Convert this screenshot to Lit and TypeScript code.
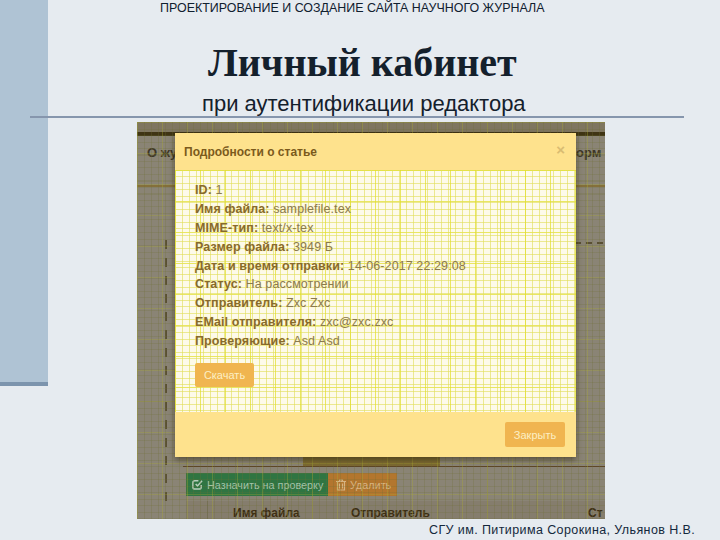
import { LitElement, html, css } from "lit";
import { customElement } from "lit/decorators.js";

const rows: [string, string][] = [
  ["ID:", "1"],
  ["Имя файла:", "samplefile.tex"],
  ["MIME-тип:", "text/x-tex"],
  ["Размер файла:", "3949 Б"],
  ["Дата и время отправки:", "14-06-2017 22:29:08"],
  ["Статус:", "На рассмотрении"],
  ["Отправитель:", "Zxc Zxc"],
  ["EMail отправителя:", "zxc@zxc.zxc"],
  ["Проверяющие:", "Asd Asd"],
];

@customElement("app-root")
export class AppRoot extends LitElement {
  static styles = css`
    :host {
      display: block;
      width: 720px;
      height: 540px;
      overflow: hidden;
      background: #e6ebf0;
      font-family: "Liberation Sans", Arial, sans-serif;
    }
    .slide { display: grid; grid-template-columns: 48px 1fr; height: 540px; }
    .side { height: 386px; background: #afc3d4; border-bottom: 4px solid #7c94ad; box-sizing: border-box; }
    .main { display: flex; flex-direction: column; min-width: 0; }
    .top {
      height: 17px; margin-left: 112px; font-size: 12.45px; line-height: 17px; color: #10202f; white-space: nowrap;
    }
    h1 {
      margin: 20px 0 0; padding-left: 160px; height: 53px; font: bold 40px/52px "Liberation Serif", serif;
      color: #14202c; white-space: nowrap;
    }
    .sub {
      margin: 0; padding-left: 154px; height: 26px; font-size: 22px; line-height: 28px; color: #14202c;
      white-space: nowrap;
    }
    .rule { height: 2px; margin: 0 36px 0 -18px; background: #8696ad; flex: none; }
    .shot {
      position: relative; margin: 4px 0 0 89px; width: 468px; height: 397px; flex: none; overflow: hidden;
      background: #8a8475;
      display: flex; flex-direction: column;
    }
    .band { height: 10px; background: #7f7660; flex: none; }
    .navline { height: 4px; background: #3f3414; flex: none; }
    .navtext {
      display: flex; justify-content: space-between; padding: 8px 0 0 10px; height: 22px; font: bold 13px/18px "Liberation Sans", sans-serif; color: #3e3626; white-space: nowrap;
    }
    .clip { width: 28px; overflow: hidden; }
    .clip2 { width: 29px; overflow: hidden; }
    .brown { height: 2px; background: #85703a; margin-top: 19px; flex: none; }
    .spacer { flex: 1; }
    .dash {
      position: absolute; left: 28px; top: 118px; height: 270px; width: 2px;
      background: repeating-linear-gradient(to bottom, #5a5034 0 9px, transparent 9px 18px);
    }
    .dash2 {
      position: absolute; left: 438px; top: 120px; width: 30px; height: 2px;
      background: repeating-linear-gradient(to right, #5a5034 0 6px, transparent 6px 11px);
    }
    .under {
      height: 9px; margin-left: 166px; width: 137px; background: #7d6a32; box-sizing: border-box; flex: none;
    }
    .hr { height: 1px; background: #5a3c22; margin: 0 0 6px 46px; flex: none; }
    .actions { display: flex; margin-left: 49px; height: 23px; flex: none; }
    .btn {
      display: flex; align-items: center; gap: 4px; font-size: 10.8px; white-space: nowrap; color: #a3c4ac; padding: 0 6px;
    }
    .btn svg { flex: none; }
    .assign { width: 142px; background: #2f7542; box-sizing: border-box; }
    .del { width: 69px; background: #b3762e; color: #d6b483; box-sizing: border-box; padding: 0 8px; }
    .thead {
      margin: 5px 0 0 49px; height: 18px; flex: none; position: relative; background: #857d6d;
      display: grid; grid-template-columns: 47px 118px 237px 1fr; font: bold 12px/24px "Liberation Sans", sans-serif; color: #3e2f14; white-space: nowrap; overflow: hidden;
    }
    .thead span:first-child { border-right: 1px solid #77705f; margin-right: 25px; }
    .grid {
      position: absolute; inset: 0; pointer-events: none;
      background-image:
        repeating-linear-gradient(to right, rgba(170,170,50,.35) 0 1px, transparent 1px 25px),
        repeating-linear-gradient(to right, rgba(110,110,50,.24) 0 1px, transparent 1px 7px),
        repeating-linear-gradient(to bottom, rgba(170,170,50,.3) 0 1px, transparent 1px 31px),
        repeating-linear-gradient(to bottom, rgba(110,110,50,.22) 0 1px, transparent 1px 6.5px);
    }
    .modal {
      position: absolute; left: 38px; top: 11px; width: 401px; height: 324px;
      display: flex; flex-direction: column; background: #fee28d;
      box-shadow: 0 3px 6px rgba(40,30,10,.5);
      z-index: 2;
    }
    .mhead {
      height: 37px; flex: none; display: flex; justify-content: space-between; align-items: center; padding: 0 11px 0 9px; box-sizing: border-box;
      font: bold 12px/16px "Liberation Sans", sans-serif; color: #7b5a1c;
    }
    .close { font-size: 15px; font-weight: bold; color: #d9bc72; margin-top: -4px; }
    .mbody {
      flex: 1; position: relative; padding: 11px 0 0 20px; box-sizing: border-box; background-color: #fdfaea;
      background-image:
        repeating-linear-gradient(to right, rgba(225,222,40,.7) 0 1px, transparent 1px 25px),
        repeating-linear-gradient(to right, rgba(225,222,90,.62) 0 1px, transparent 1px 7px),
        repeating-linear-gradient(to bottom, rgba(225,222,40,.7) 0 1px, transparent 1px 31px),
        repeating-linear-gradient(to bottom, rgba(225,222,90,.62) 0 1px, transparent 1px 6.5px);
    }
    .row { height: 18.9px; line-height: 18.9px; font-size: 12.5px; color: #8a7a4e; white-space: nowrap; letter-spacing: 0.1px; text-shadow: 0 0 2px #fdeea0; }
    .row b { color: #876a2c; }
    .primary {
      display: flex; align-items: center; justify-content: center; background: #f0b550; color: #fcefc4; font-size: 11px;
      border-radius: 2px; box-sizing: border-box;
    }
    .dl { width: 59px; height: 24px; margin-top: 12px; }
    .mfoot { height: 45px; flex: none; display: flex; justify-content: flex-end; align-items: center; padding: 0 11px 0 0; }
    .shut { width: 60px; height: 25px; }
    .footer {
      flex: 1; padding: 3px 0 0 381px; font-size: 12.5px; line-height: 17px; letter-spacing: 0.4px; color: #14283c; white-space: nowrap;
    }
  `;

  render() {
    return html`
      <div class="slide">
        <div class="side"></div>
        <div class="main">
          <div class="top">ПРОЕКТИРОВАНИЕ И СОЗДАНИЕ САЙТА НАУЧНОГО ЖУРНАЛА</div>
          <h1>Личный кабинет</h1>
          <p class="sub">при аутентификации редактора</p>
          <div class="rule"></div>
          <div class="shot">
            <div class="band"></div>
            <div class="navline"></div>
            <div class="navtext"><span class="clip">О жу</span><span class="clip2">орм</span></div>
            <div class="brown"></div>
            <div class="spacer"></div>
            <div class="under"></div>
            <div class="hr"></div>
            <div class="actions">
              <div class="btn assign">
                <svg width="11" height="11" viewBox="0 0 12 12" fill="none" stroke="#b7cfbd" stroke-width="1.6">
                  <path d="M10 6.5V9a2 2 0 0 1-2 2H3a2 2 0 0 1-2-2V4a2 2 0 0 1 2-2h4" />
                  <path d="M4 5.5 6 7.5 11 2" />
                </svg>
                <span>Назначить на проверку</span>
              </div>
              <div class="btn del">
                <svg width="10" height="12" viewBox="0 0 10 12" fill="none" stroke="#d6b483" stroke-width="1.2">
                  <path d="M0 2.5h10M3.5 2.5V1h3v1.5M1.5 2.5V11h7V2.5M3.5 4.5v5M6.5 4.5v5" />
                </svg>
                <span>Удалить</span>
              </div>
            </div>
            <div class="thead">
              <span></span><span>Имя файла</span><span>Отправитель</span><span>Ст</span>
            </div>
            <div class="dash"></div>
            <div class="dash2"></div>
            <div class="grid"></div>
            <div class="modal">
              <div class="mhead"><span>Подробности о статье</span><span class="close">×</span></div>
              <div class="mbody">
                ${rows.map(([k, v]) => html`<div class="row"><b>${k}</b> ${v}</div>`)}
                <div class="primary dl">Скачать</div>
              </div>
              <div class="mfoot"><div class="primary shut">Закрыть</div></div>
            </div>
          </div>
          <div class="footer">СГУ им. Питирима Сорокина, Ульянов Н.В.</div>
        </div>
      </div>
    `;
  }
}
